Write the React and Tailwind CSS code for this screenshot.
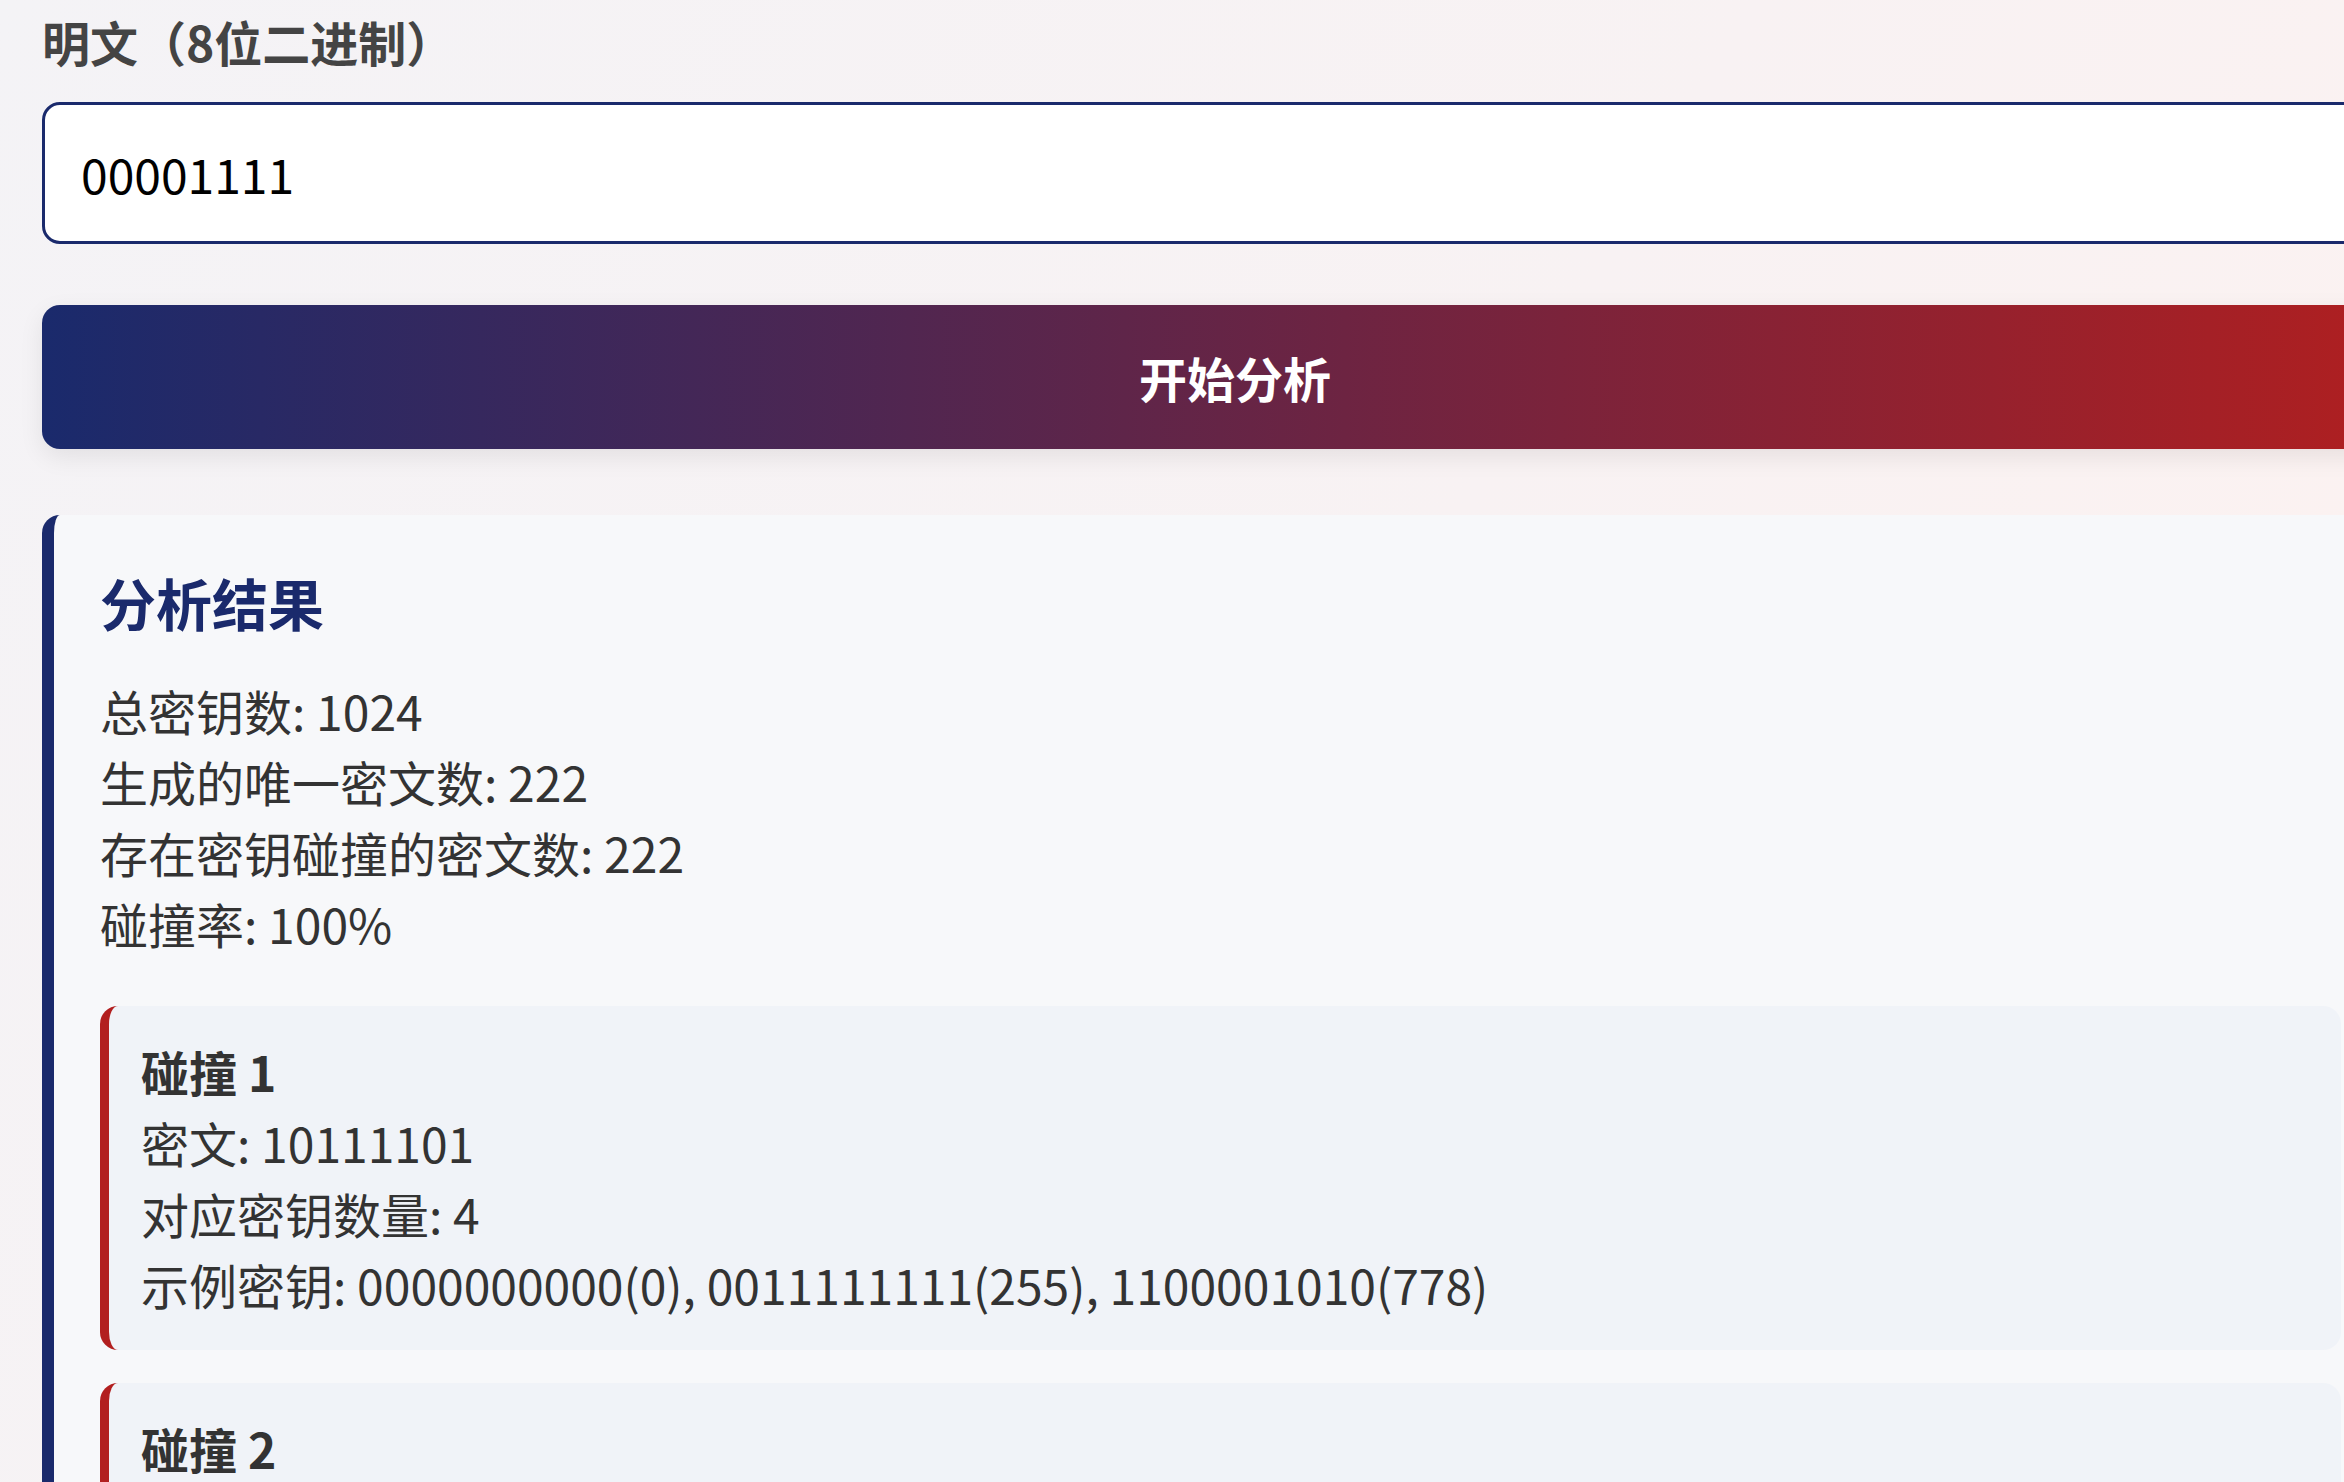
import React, { useState } from 'react';

const collisions = [
    { cipher: '10111101', count: 4, keys: '0000000000(0), 0011111111(255), 1100001010(778)' },
    { cipher: '01100110', count: 4, keys: '0000000001(1), 0011111110(254), 1100001011(779)' },
    { cipher: '11010010', count: 4, keys: '0000000010(2), 0011111101(253), 1100001000(776)' },
];

const App = () => {
    const [plaintext, setPlaintext] = useState('00001111');

    return (
        <div
            className="h-screen overflow-hidden bg-[linear-gradient(120deg,#f4f3f6_0%,#f8f2f3_55%,#fdf2f0_100%)] text-[#333]"
            style={{ fontFamily: '"Noto Sans CJK SC", "Noto Sans", sans-serif' }}
        >
            <div className="ml-[42px] w-[2386px] pt-[5px]">
                {/* Input */}
                <label className="block text-[48px] leading-[72px] font-bold text-[#444] mb-[25px]">
                    明文（8位二进制）
                </label>
                <input
                    value={plaintext}
                    onChange={(e) => setPlaintext(e.target.value)}
                    className="block w-full h-[142px] px-[36px] bg-white border-[3px] border-[#1a2a6c] rounded-[18px] text-[48px] text-black outline-none"
                />

                {/* Action */}
                <button className="mt-[61px] w-full h-[144px] rounded-[18px] bg-[linear-gradient(to_right,#1a2a6c,#b21f1f)] text-white text-[48px] font-bold shadow-[0_8px_24px_rgba(0,0,0,0.08)]">
                    开始分析
                </button>

                {/* Results */}
                <div className="mt-[66px] bg-[#f7f8fa] border-l-[12px] border-[#1a2a6c] rounded-[18px] pl-[46px] pr-[87px] pt-[45px] pb-[40px]">
                    <h3 className="text-[56px] leading-[84px] font-bold text-[#1a2a6c] mb-[31px]">分析结果</h3>
                    <div className="text-[48px] leading-[71px] text-[#333]">
                        <p>总密钥数: 1024</p>
                        <p>生成的唯一密文数: 222</p>
                        <p>存在密钥碰撞的密文数: 222</p>
                        <p>碰撞率: 100%</p>
                    </div>

                    <div className="mt-[47px] flex flex-col gap-[33px]">
                        {collisions.map((c, i) => (
                            <div
                                key={i}
                                className="bg-[#f0f3f8] border-l-[9px] border-[#b21f1f] rounded-[18px] pl-[32px] pr-[30px] pt-[30px] pb-[30px] text-[48px] leading-[71px]"
                            >
                                <p className="font-bold">碰撞 {i + 1}</p>
                                <p>密文: {c.cipher}</p>
                                <p>对应密钥数量: {c.count}</p>
                                <p>示例密钥: {c.keys}</p>
                            </div>
                        ))}
                    </div>
                </div>
            </div>
        </div>
    );
};

export default App;
